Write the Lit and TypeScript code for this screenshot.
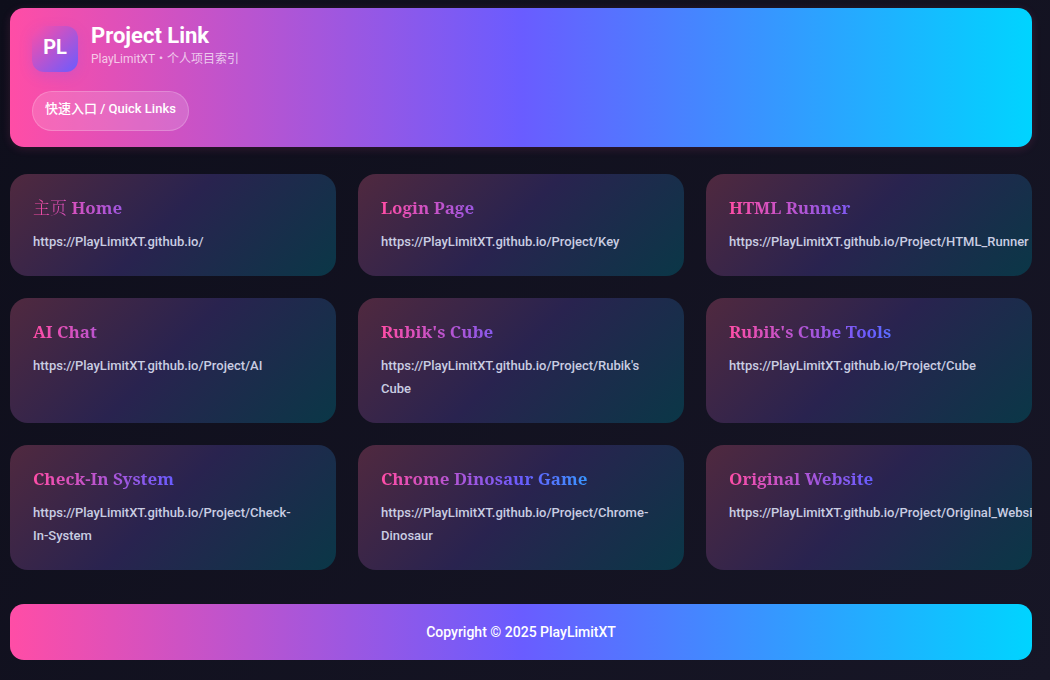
import { LitElement, html, css } from "lit";
import { customElement, property } from "lit/decorators.js";

interface Project {
  title: string;
  // Leading part of the title in Chinese, set in a lighter weight
  prefix?: string;
  path: string;
  // Last part of the path, kept together on one line
  tail?: string;
}

const BASE = "https://PlayLimitXT.github.io/";

const PROJECTS: Project[] = [
  { prefix: "主页", title: " Home", path: "" },
  { title: "Login Page", path: "Project/Key" },
  { title: "HTML Runner", path: "Project/HTML_Runner" },
  { title: "AI Chat", path: "Project/AI" },
  { title: "Rubik's Cube", path: "Project/Rubik's Cube" },
  { title: "Rubik's Cube Tools", path: "Project/Cube" },
  { title: "Check-In System", path: "Project/Check-", tail: "In-System" },
  { title: "Chrome Dinosaur Game", path: "Project/Chrome-Dinosaur" },
  { title: "Original Website", path: "Project/Original_Website" },
];

@customElement("project-card")
export class ProjectCard extends LitElement {
  @property({ attribute: false }) project!: Project;

  static styles = css`
    :host {
      display: block;
      min-width: 0;
    }
    .card {
      display: block;
      box-sizing: border-box;
      height: 100%;
      padding: 23px;
      overflow: hidden;
      border-radius: 18px;
      background: linear-gradient(135deg, #50293f 0%, #29234f 48%, #0a3747 100%);
      color: #c9cde2;
      text-decoration: none;
    }
    .title {
      margin: 0 0 11px;
      font: 700 17px/22px "Noto Serif", "Noto Serif CJK SC", "Liberation Serif", "Noto Sans CJK SC", serif;
      color: transparent;
      background: linear-gradient(90deg, #ff4da6, #6a5cff 50%, #00d4ff);
      background-clip: text;
      -webkit-background-clip: text;
    }
    .prefix {
      font-weight: 300;
    }
    .url {
      margin: 0;
      font-size: 13px;
      line-height: 23px;
      font-weight: 500;
    }
    .tail {
      white-space: nowrap;
    }
  `;

  render() {
    const { prefix, title, path, tail } = this.project;
    return html`<a class="card" href=${BASE + path + (tail ?? "")}>
      <h2 class="title">${prefix ? html`<span class="prefix">${prefix}</span>` : ""}${title}</h2>
      <p class="url">${BASE + path}${tail ? html`<wbr /><span class="tail">${tail}</span>` : ""}</p>
    </a>`;
  }
}

@customElement("app-root")
export class AppRoot extends LitElement {
  static styles = css`
    :host {
      display: block;
      box-sizing: border-box;
      min-height: 100vh;
      padding: 8px 18px 20px 10px;
      background: linear-gradient(135deg, #0e0e1b, #171626);
      font-family: Roboto, "Noto Sans CJK SC", sans-serif;
      color: #fff;
    }
    .header {
      padding: 18px 22px 16px;
      border-radius: 14px;
      background: linear-gradient(90deg, #ff4da6, #6a5cff 50%, #00d4ff);
      box-shadow: 0 2px 10px rgba(255, 77, 166, 0.14);
    }
    .brand {
      display: flex;
      gap: 13px;
      margin-bottom: 19px;
    }
    .logo {
      display: grid;
      place-items: center;
      width: 46px;
      height: 46px;
      box-sizing: border-box;
      padding-bottom: 4px;
      border-radius: 12px;
      background: linear-gradient(135deg, #ff4da6, #6a5cff);
      box-shadow: 0 4px 14px rgba(106, 92, 255, 0.2);
      font-size: 20px;
      font-weight: 700;
    }
    .name {
      margin: 0;
      font-size: 22px;
      line-height: 20px;
      font-weight: 700;
    }
    .tagline {
      margin: 4px 0 0;
      font-size: 12px;
      line-height: 18px;
      color: rgba(255, 255, 255, 0.7);
    }
    .quick {
      display: inline-block;
      box-sizing: border-box;
      height: 40px;
      padding: 0 12px;
      border: 1px solid rgba(255, 255, 255, 0.2);
      border-radius: 20px;
      background: rgba(255, 255, 255, 0.15);
      color: #fff;
      font-size: 13px;
      line-height: 34px;
      font-weight: 500;
      text-decoration: none;
      vertical-align: top;
    }
    .grid {
      display: grid;
      grid-template-columns: repeat(3, minmax(0, 1fr));
      gap: 22px;
      margin: 27px 0 34px;
    }
    .footer {
      padding: 16px 22px;
      border-radius: 14px;
      background: linear-gradient(90deg, #ff4da6, #6a5cff 50%, #00d4ff);
      text-align: center;
      font-size: 14px;
      line-height: 24px;
      font-weight: 500;
    }
  `;

  render() {
    return html`
      <header class="header">
        <div class="brand">
          <div class="logo">PL</div>
          <div>
            <h1 class="name">Project Link</h1>
            <p class="tagline">PlayLimitXT・个人项目索引</p>
          </div>
        </div>
        <a class="quick" href="#links">快速入口 / Quick Links</a>
      </header>
      <main class="grid" id="links">
        ${PROJECTS.map((p) => html`<project-card .project=${p}></project-card>`)}
      </main>
      <footer class="footer">Copyright © 2025 PlayLimitXT</footer>
    `;
  }
}
